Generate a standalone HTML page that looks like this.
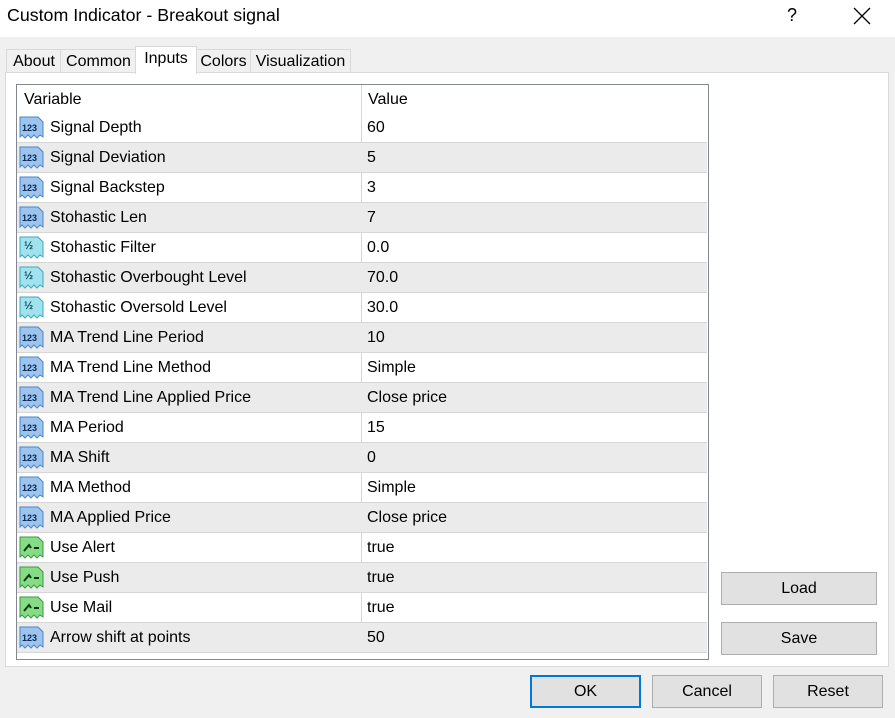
<!DOCTYPE html>
<html><head><meta charset="utf-8"><style>
body{margin:0;width:895px;height:718px;background:#f0f0f0;font-family:"Liberation Sans",Arial,sans-serif;font-size:16px;color:#000;position:relative;overflow:hidden}
.title{position:absolute;left:0;top:0;width:895px;height:37px;background:#fff}
.title .t{position:absolute;left:7px;top:5px;font-size:17.8px}
.title .q{position:absolute;left:787px;top:5px;font-size:18px}
.tab{position:absolute;top:49px;height:23px;border:1px solid #d9d9d9;border-bottom:none;background:#f0f0f0;font-size:16px;line-height:24px;text-align:center}
.tab.sel{top:46px;height:27px;background:#fff;z-index:2}
.panel{position:absolute;left:5px;top:72px;width:882px;height:593px;background:#fff;border:1px solid #d9d9d9}
.grid{position:absolute;left:16px;top:84px;width:691px;height:574px;border:1px solid #828790;background:#fff;overflow:hidden}
.row{position:absolute;left:0;width:690px;height:29px;border-bottom:1px solid #d6d6d6}
.row.g{background:#ebebeb}
.row span{position:absolute;top:6px}
.row .n{left:33px}.row .v{left:350px}
.div{position:absolute;left:344px;top:0;width:1px;height:568px;background:#d6d6d6}
.ic{position:absolute;left:2px;top:3px}
.btn{position:absolute;height:31px;background:#e1e1e1;border:1px solid #adadad;text-align:center;line-height:31px;font-size:16px}
</style></head><body>
<div class="title"><span class="t">Custom Indicator - Breakout signal</span><span class="q">?</span>
<svg style="position:absolute;left:853px;top:7px" width="18" height="18"><path d="M1 1L17 17M17 1L1 17" stroke="#000" stroke-width="1.3"/></svg></div>
<div class="tab" style="left:6px;width:54px">About</div>
<div class="tab" style="left:60px;width:75px">Common</div>
<div class="tab sel" style="left:135px;width:60px">Inputs</div>
<div class="tab" style="left:195px;width:55px">Colors</div>
<div class="tab" style="left:250px;width:99px">Visualization</div>
<div class="panel"></div>
<div class="grid">
<div class="row" style="top:0;height:28px;border:none"><span style="left:7px;top:6px">Variable</span><span style="left:351px;top:6px">Value</span></div>
<div class="div"></div>
<div id="rows"></div>
</div>
<div class="btn" style="left:721px;top:572px;width:154px">Load</div>
<div class="btn" style="left:721px;top:622px;width:154px">Save</div>
<div class="btn" style="left:530px;top:675px;width:107px;border:2px solid #0078d7;height:29px;line-height:29px">OK</div>
<div class="btn" style="left:652px;top:675px;width:108px">Cancel</div>
<div class="btn" style="left:773px;top:675px;width:108px">Reset</div>
<script>
var d=[["i","Signal Depth","60"],["i","Signal Deviation","5"],["i","Signal Backstep","3"],["i","Stohastic Len","7"],["f","Stohastic Filter","0.0"],["f","Stohastic Overbought Level","70.0"],["f","Stohastic Oversold Level","30.0"],["i","MA Trend Line Period","10"],["i","MA Trend Line Method","Simple"],["i","MA Trend Line Applied Price","Close price"],["i","MA Period","15"],["i","MA Shift","0"],["i","MA Method","Simple"],["i","MA Applied Price","Close price"],["b","Use Alert","true"],["b","Use Push","true"],["b","Use Mail","true"],["i","Arrow shift at points","50"]];
var h="";
d.forEach(function(r,k){
var c=r[0]=="i"?["#9cc4ec","#4a86c8","123","#0a2a5a"]:r[0]=="f"?["#a0e2ee","#3aaac0","½","#0a4a5a"]:["#86dc86","#3a9a3a","",""];
var ic='<svg class="ic" width="26" height="24"><path d="M1 1H19L24 6V21L21 19L18 22L15 19L12 22L9 19L6 22L3 19L1 21Z" fill="'+c[0]+'" stroke="'+c[1]+'"/>'+(r[0]=="b"?'<path d="M5 15L10 9L12 12M15 12H20" stroke="#0a3a0a" stroke-width="2" fill="none"/>':'<text x="'+(r[0]=="i"?3:5)+'" y="'+(r[0]=="i"?15:13)+'" font-size="'+(r[0]=="i"?9:11)+'" font-weight="bold" fill="'+c[3]+'" font-family="Liberation Sans">'+c[2]+'</text>')+'</svg>';
h+='<div class="row'+(k%2?' g':'')+'" style="top:'+(28+30*k)+'px">'+ic+'<span class="n">'+r[1]+'</span><span class="v">'+r[2]+'</span></div>';});
document.getElementById("rows").innerHTML=h;
</script>
</body></html>
